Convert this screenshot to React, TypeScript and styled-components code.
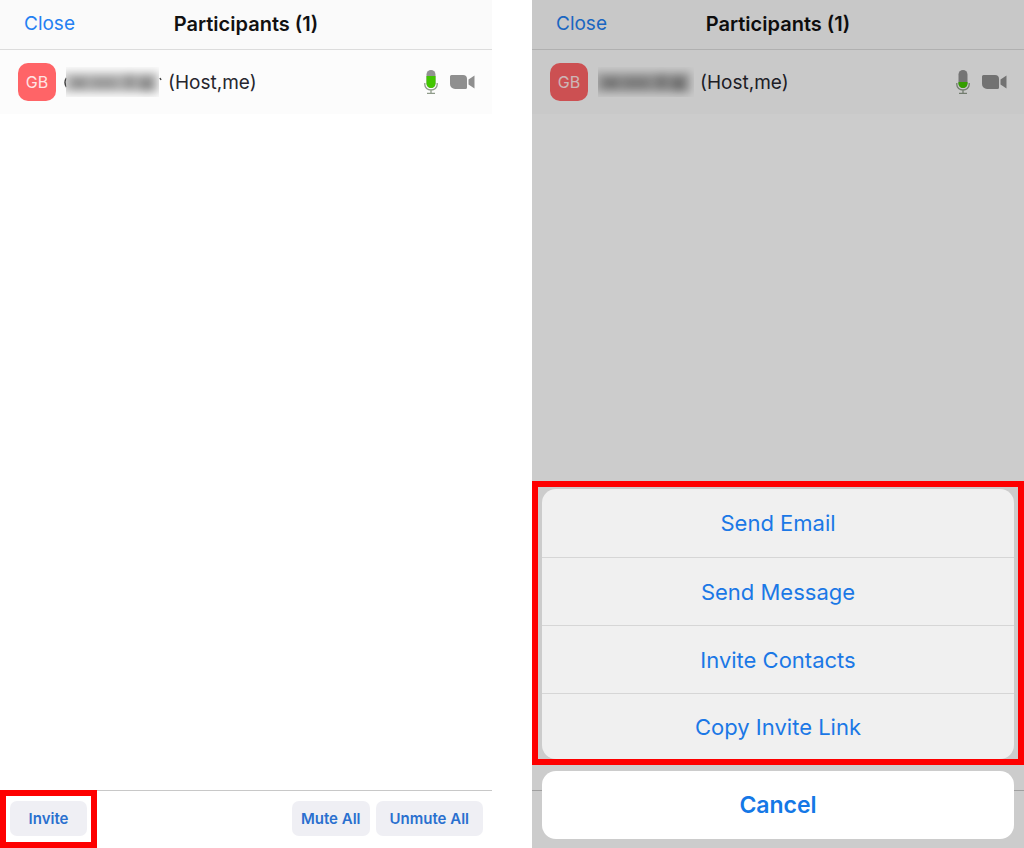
import React from "react";
import styled, { createGlobalStyle, css } from "styled-components";

const GlobalStyle = createGlobalStyle`
  *, *::before, *::after { box-sizing: border-box; }
  body { margin: 0; background: #fff; font-family: Inter, "Liberation Sans", sans-serif; }
  button { font: inherit; border: 0; margin: 0; padding: 0; cursor: pointer; }
`;

const Page = styled.main`
  display: grid;
  grid-template-columns: 1fr 1fr;
  gap: 40px;
  min-height: 100vh;
`;

const Screen = styled.section`
  position: relative;
  display: flex;
  flex-direction: column;
  min-width: 0;
  background: #fff;
`;

const Header = styled.header`
  display: grid;
  grid-template-columns: 1fr auto 1fr;
  align-items: center;
  height: 50px;
  padding: 0 24px 2px;
  background: #fafafa;
  border-bottom: 1px solid #dcdcdc;
`;

const CloseButton = styled.button`
  justify-self: start;
  background: none;
  color: #2480f2;
  font-size: 19px;
  line-height: 24px;
`;

const Title = styled.h1`
  margin: 0;
  color: #111;
  font-size: 20px;
  font-weight: 600;
  line-height: 24px;
`;

const List = styled.ul`
  flex: 1;
  margin: 0;
  padding: 0;
  list-style: none;
`;

const Participant = styled.li`
  display: flex;
  align-items: center;
  height: 64px;
  padding: 0 17px 0 18px;
  background: #fcfcfc;
`;

const Avatar = styled.span`
  display: grid;
  place-items: center;
  width: 38px;
  height: 38px;
  border-radius: 10px;
  background: #ff6467;
  color: #ffe4e4;
  font-size: 16px;
`;

const HiddenName = styled.svg`
  display: block;
  width: 98px;
  height: 32px;
  margin: 0 6px 0 8px;
`;

const Role = styled.span`
  flex: 1;
  padding-top: 2px;
  color: #26262e;
  font-size: 19px;
  line-height: 24px;
`;

const StatusIcons = styled.span`
  display: flex;
  align-items: center;
  gap: 12px;
`;

const Footer = styled.footer`
  display: flex;
  align-items: center;
  gap: 6px;
  height: 58px;
  padding: 0 9px 2px 0;
  border-top: 1px solid #c8c8c8;
`;

const FooterButton = styled.button<{ $wide?: boolean }>`
  height: 35px;
  padding: 0 ${(p) => (p.$wide ? 14 : 9)}px;
  border-radius: 7px;
  background: #efeff4;
  color: #2a70cf;
  font-size: 15px;
  font-weight: 600;
  white-space: nowrap;
`;

const highlight = css`
  border: 6px solid #fe0000;
`;

const InviteHighlight = styled.div`
  ${highlight}
  display: grid;
  align-self: flex-start;
  height: 58px;
  width: 97px;
  margin: -1px auto 0 0;
  padding: 5px 4px 6px;
`;

const Dimmer = styled.div`
  position: absolute;
  inset: 0;
  background: rgba(0, 0, 0, 0.2);
`;

const Sheet = styled.div`
  position: absolute;
  right: 0;
  bottom: 0;
  left: 0;
`;

const MenuHighlight = styled.div`
  ${highlight}
  padding: 2px 4px 0;
`;

const Menu = styled.div`
  overflow: hidden;
  border-radius: 14px;
  background: #f0f0f0;
`;

const MenuItem = styled.button`
  display: block;
  width: 100%;
  height: 68px;
  background: none;
  color: #1b78e6;
  font-size: 22px;

  & + & { border-top: 1px solid #d6d6d6; }
  &:last-child { height: 66px; }
`;

const CancelArea = styled.div`
  padding: 6px 10px 9px;
`;

const CancelButton = styled.button`
  width: 100%;
  height: 68px;
  border-radius: 14px;
  background: #fff;
  color: #1478e6;
  font-size: 23px;
  font-weight: 600;
`;

function Microphone({ level }: { level: number }) {
  const id = React.useId();
  return (
    <svg width="14" height="26" viewBox="0 0 14 26" role="img" aria-label="Microphone on">
      <clipPath id={id}>
        <rect x="2.5" y="1" width="9" height="18" rx="4.5" />
      </clipPath>
      <g clipPath={`url(#${id})`}>
        <rect width="14" height="20" fill="#929292" />
        <rect y={level} width="14" height="20" fill="#42c600" />
      </g>
      <path d="M.8 14v1.5a6.2 5.5 0 0 0 12.4 0V14M7 21v3.2M3 24.3h8" fill="none" stroke="#8f9b8a" strokeWidth="1.3" />
    </svg>
  );
}

function Camera() {
  return (
    <svg width="25" height="14" viewBox="0 0 25 14" role="img" aria-label="Camera on">
      <path d="M1.5 0H13a4 4 0 0 1 4 4v8.500a1.500 1.500 0 0 1-1.500 1.500H5a5 5 0 0 1-5-5V1.500A1.500 1.500 0 0 1 1.500 0ZM24.500.5v13L18.500 9.500v-5Z" fill="#8f8f8f" />
    </svg>
  );
}

function BlurredName({ peek }: { peek?: boolean }) {
  const id = React.useId();
  return (
    <HiddenName viewBox="0 0 98 32" aria-hidden="true">
      <defs>
        <filter id={id} x="-20%" y="-60%" width="140%" height="220%">
          <feGaussianBlur stdDeviation="4" />
        </filter>
        <clipPath id={`${id}c`}>
          <rect x="2" y="1" width={peek ? 93 : 96} height="30" />
        </clipPath>
      </defs>
      {peek && <path d="M2.500 12q-3 4.500 0 9M96 12l1 2" fill="none" stroke="#444" strokeWidth="1.500" />}
      <g clipPath={`url(#${id}c)`}>
        <g filter={`url(#${id})`}>
          <rect x="-2" y="6" width="97" height="21" fill="#c8c8c8" />
          <rect x="4" y="10" width="86" height="14" fill="#acacac" />
          <rect x="8" y="12" width="14" height="10" fill="#8c8c8c" />
          <rect x="28" y="12" width="24" height="10" fill="#969696" />
          <rect x="61" y="9" width="9" height="14" fill="#909090" />
          <rect x="76" y="10" width="14" height="15" fill="#8a8a8a" />
        </g>
      </g>
    </HiddenName>
  );
}

function Participants({ level, peek }: { level: number; peek?: boolean }) {
  return (
    <>
      <Header>
        <CloseButton type="button">Close</CloseButton>
        <Title>Participants (1)</Title>
      </Header>
      <List>
        <Participant>
          <Avatar>GB</Avatar>
          <BlurredName peek={peek} />
          <Role>(Host,me)</Role>
          <StatusIcons>
            <Microphone level={level} />
            <Camera />
          </StatusIcons>
        </Participant>
      </List>
    </>
  );
}

const inviteOptions = ["Send Email", "Send Message", "Invite Contacts", "Copy Invite Link"];

export default function App() {
  return (
    <>
      <GlobalStyle />
      <Page>
        <Screen>
          <Participants level={7} peek />
          <Footer>
            <InviteHighlight>
              <FooterButton type="button">Invite</FooterButton>
            </InviteHighlight>
            <FooterButton type="button">Mute All</FooterButton>
            <FooterButton type="button" $wide>Unmute All</FooterButton>
          </Footer>
        </Screen>
        <Screen>
          <Participants level={13} />
          <Footer />
          <Dimmer />
          <Sheet role="dialog" aria-label="Invite">
            <MenuHighlight>
              <Menu>
                {inviteOptions.map((option) => (
                  <MenuItem type="button" key={option}>{option}</MenuItem>
                ))}
              </Menu>
            </MenuHighlight>
            <CancelArea>
              <CancelButton type="button">Cancel</CancelButton>
            </CancelArea>
          </Sheet>
        </Screen>
      </Page>
    </>
  );
}
